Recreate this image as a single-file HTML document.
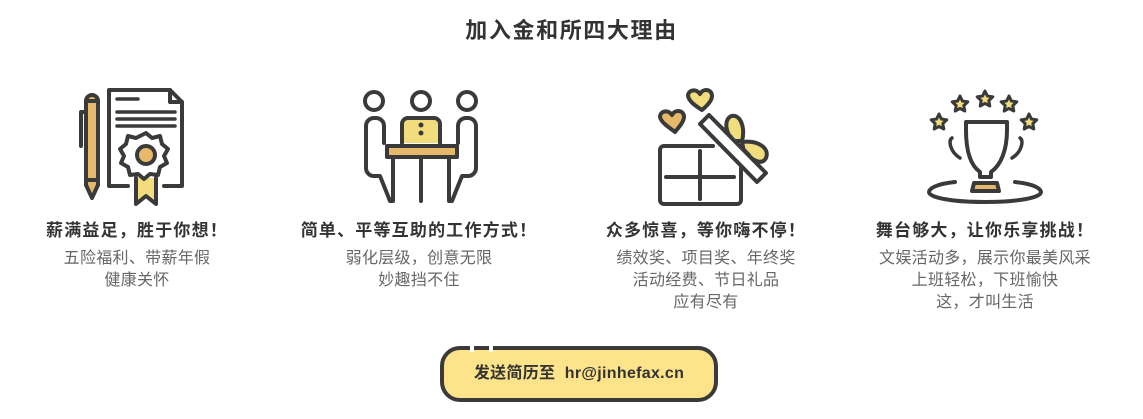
<!DOCTYPE html>
<html><head><meta charset="utf-8"><style>
*{margin:0;padding:0;box-sizing:border-box}
body{width:1143px;height:419px;background:#fff;position:relative;overflow:hidden;font-family:"Liberation Sans","Noto Sans CJK SC",sans-serif;color:#333}
.t{position:absolute;left:0;width:1143px;top:13px;text-align:center;font-size:22px;font-weight:bold;color:#333;letter-spacing:1.6px}
.col{position:absolute;top:219px;width:300px;text-align:center}
.col h3{font-size:17px;font-weight:bold;color:#333;line-height:24px;letter-spacing:1.2px}
.col p{font-size:16px;color:#666;line-height:22px;margin-top:5px;letter-spacing:0.3px}
svg{position:absolute;left:0;top:0}
.btn{position:absolute;left:440px;top:346px;width:278px;height:56px;border:4px solid #3a3a3a;border-radius:20px;background:#fde38a;text-align:center;line-height:48px;font-size:16px;font-weight:bold;color:#333;letter-spacing:0.3px}
.gap2{position:absolute;left:470px;top:344px;width:4px;height:8px;background:#fff}
.gap3{position:absolute;left:489px;top:344px;width:4px;height:8px;background:#fff}
</style></head><body>
<div class="t">加入金和所四大理由</div>
<svg width="1143" height="419" fill="none" stroke="#3a3a3a" stroke-width="4" stroke-linejoin="round" stroke-linecap="round">
<path d="M86 101 a6 6 0 0 1 12 0 V185 L92 198 L86 185Z" fill="#e6b86a"/>
<path d="M86 101 h12 M86 180 h12"/>
<path d="M86 112 h-5 v34"/>
<path d="M109 186 V90 H170 L182 102 V186 H164 M128 186 H109"/>
<path d="M170 90 V102 H182"/>
<path d="M117 99 H138 M117 112 H175 M117 119 H175 M117 126 H175" stroke-width="3.5"/>
<path d="M136 178 V204 L146 196 L156 204 V178" fill="#f3dc7e"/>
<path d="M146 133 l6 5 l8 -2 l2 8 l6 5 l-4 7 l3 7 l-7 4 l-2 8 l-8 -1 l-6 5 l-6 -5 l-8 1 l-2 -8 l-7 -4 l3 -7 l-4 -7 l6 -5 l2 -8 l8 2z" fill="#fff"/>
<circle cx="146" cy="155" r="9" fill="#e6b86a"/>
<circle cx="374" cy="101" r="9"/><circle cx="421" cy="101" r="9"/><circle cx="467" cy="101" r="9"/>
<path d="M402 143 V124 a6 6 0 0 1 6 -6 h26 a6 6 0 0 1 6 6 V143" fill="#f1dc7e"/>
<path d="M384 143 V126 a8 8 0 0 0 -8 -8 h-2 a8 8 0 0 0 -8 8 V168 a8 8 0 0 0 8 8 h6 L390 201 H393 V158"/>
<path d="M458 143 V126 a8 8 0 0 1 8 -8 h2 a8 8 0 0 1 8 8 V168 a8 8 0 0 1 -8 8 h-6 L452 201 H449 V158"/>
<path d="M421 158 V201"/>
<rect x="387" y="146" width="70" height="11" fill="#e6b86a"/>
<circle cx="421" cy="125" r="1.5" fill="#3a3a3a" stroke-width="2"/><circle cx="421" cy="133" r="1.5" fill="#3a3a3a" stroke-width="2"/>
<path d="M713 146 H664 a4 4 0 0 0 -4 4 V200 a4 4 0 0 0 4 4 H737 a4 4 0 0 0 4 -4 V168"/>
<path d="M700 151 V199 M666 177 H734"/>
<path d="M733 141 C722 128 726 114 735 116 C742 118 745 130 742 141z" fill="#f1dc7e"/>
<path d="M742 142 C758 140 770 148 766 158 C762 166 752 160 744 152z" fill="#f1dc7e"/>
<path d="M700 124 L709 115 L766 173 L757 182Z" fill="#fff"/>
<path d="M722 128 L731 137 M740 146 L749 155"/>
<path d="M675 132 c-8 -6 -14 -10 -15 -15 c0 -6 8 -8 12 -2 c3 -6 12 -5 12 2 c0 4 -4 9 -9 15z" fill="#e6b86a"/>
<path d="M702 110 c-8 -5 -13 -9 -14 -14 c0 -6 8 -8 12 -2 c3 -6 12 -5 12 2 c0 4 -4 9 -10 14z" fill="#f1dc7e"/>
<path d="M955 182 c-20 2 -26 7 -26 10 c0 6 25 10 56 10 c31 0 56 -4 56 -10 c0 -3 -6 -8 -26 -10"/>
<path d="M966 122 H1007 V130 c0 20 -6 35 -16 42 V177 H980 V172 c-10 -7 -14 -22 -14 -42z"/>
<path d="M974 183 H997 l2 8 H972z" fill="#e6b86a"/>
<path d="M952 138 c-4 2 -2 14 8 20 M1020 138 c4 2 2 14 -8 20" stroke-width="3.5"/>
<g fill="#f1dc7e" stroke-width="3">
<path d="M939 114 l2.4 5 5.4 .8 -4 3.8 1 5.4 -4.8 -2.6 -4.8 2.6 1 -5.4 -4 -3.8 5.4 -.8z"/>
<path d="M960 96 l2.4 5 5.4 .8 -4 3.8 1 5.4 -4.8 -2.6 -4.8 2.6 1 -5.4 -4 -3.8 5.4 -.8z"/>
<path d="M985 91 l2.4 5 5.4 .8 -4 3.8 1 5.4 -4.8 -2.6 -4.8 2.6 1 -5.4 -4 -3.8 5.4 -.8z"/>
<path d="M1009 96 l2.4 5 5.4 .8 -4 3.8 1 5.4 -4.8 -2.6 -4.8 2.6 1 -5.4 -4 -3.8 5.4 -.8z"/>
<path d="M1029 114 l2.4 5 5.4 .8 -4 3.8 1 5.4 -4.8 -2.6 -4.8 2.6 1 -5.4 -4 -3.8 5.4 -.8z"/>
</g>
</svg>
<div class="col" style="left:-13px"><h3>薪满益足，胜于你想！</h3><p>五险福利、带薪年假<br>健康关怀</p></div>
<div class="col" style="left:269px"><h3>简单、平等互助的工作方式！</h3><p>弱化层级，创意无限<br>妙趣挡不住</p></div>
<div class="col" style="left:556px"><h3>众多惊喜，等你嗨不停！</h3><p>绩效奖、项目奖、年终奖<br>活动经费、节日礼品<br>应有尽有</p></div>
<div class="col" style="left:835px"><h3>舞台够大，让你乐享挑战！</h3><p>文娱活动多，展示你最美风采<br>上班轻松，下班愉快<br>这，才叫生活</p></div>
<div class="btn">发送简历至&nbsp;&nbsp;hr@jinhefax.cn</div>
<div class="gap2"></div><div class="gap3"></div>
</body></html>
